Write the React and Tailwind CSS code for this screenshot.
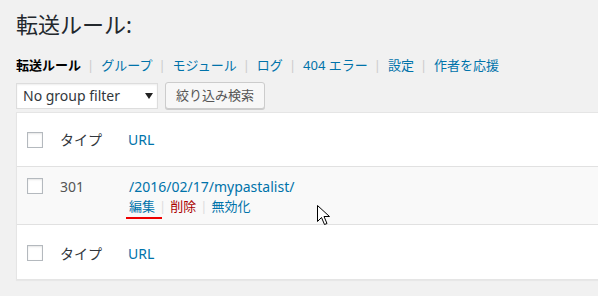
const font = { fontFamily: '"Segoe UI", "Noto Sans", "Noto Sans CJK JP", sans-serif' };

const Checkbox = () => (
  <span className="block w-4 h-4 border border-[#b4b9be] bg-white shadow-[inset_0_1px_2px_rgba(0,0,0,0.1)]" />
);

const Sep = () => <span className="text-[#ccc] ml-[6px] mr-[7px]">|</span>;

const Cursor = () => (
  <svg className="absolute left-[317px] top-[205px]" width="13" height="21" viewBox="0 0 13 21">
    <path d="M0.5 0.5 L0.5 16.5 L4.5 12.5 L7.5 19.5 L10 18.5 L7 11.5 L12.5 11.5 Z" fill="#fff" stroke="#000" strokeWidth="1" strokeLinejoin="miter" />
  </svg>
);

const App = () => {
  const tabs = ['グループ', 'モジュール', 'ログ', '404 エラー', '設定', '作者を応援'];

  return (
    <div className="relative w-[598px] h-[296px] overflow-hidden bg-[#f1f1f1] text-[#444] pl-4 pt-[10px]" style={font}>
      <h1 className="text-[22px] leading-[29px] text-[#23282d] font-normal">転送ルール:</h1>

      <div className="flex items-center mt-[16px] text-[13px] leading-5">
        <span className="font-bold text-black">転送ルール</span>
        {tabs.map((t) => (
          <span key={t} className="flex items-center">
            <Sep />
            <span className="text-[#0073aa]">{t}</span>
          </span>
        ))}
      </div>

      <div className="flex items-center gap-[7px] mt-[7px]">
        <div className="flex items-center justify-between w-[142px] h-[26px] border border-[#ddd] bg-white pl-[6px] pr-[4px] shadow-[inset_0_1px_2px_rgba(0,0,0,0.07)]">
          <span className="text-[14px] text-[#32373c]">No group filter</span>
          <svg width="8" height="6" viewBox="0 0 8 6"><path d="M0 0 H8 L4 6 Z" fill="#222" /></svg>
        </div>
        <button className="h-[27px] px-[10px] border border-[#ccc] rounded-[3px] bg-[#f7f7f7] text-[13px] text-[#555] shadow-[0_1px_0_#ccc]">
          絞り込み検索
        </button>
      </div>

      <div className="mt-[3px] border border-r-0 border-[#e5e5e5] bg-white shadow-[0_1px_1px_rgba(0,0,0,0.04)] text-[14px]">
        <div className="flex items-center h-[54px] border-b border-[#e1e1e1]">
          <div className="w-[43px] pl-[10px]"><Checkbox /></div>
          <span className="w-[68px] text-[#32373c]">タイプ</span>
          <span className="text-[#0073aa]">URL</span>
        </div>

        <div className="flex h-[58px] bg-[#f9f9f9] border-b border-[#e1e1e1] pt-[10px]">
          <div className="w-[43px] pl-[10px] pt-[1px]"><Checkbox /></div>
          <span className="w-[69px] text-[#555] leading-[18px] pt-[1px]">301</span>
          <div className="leading-[18px] pt-[1px]">
            <div className="text-[#0073aa]">/2016/02/17/mypastalist/</div>
            <div className="flex items-center text-[13px] mt-[1px]">
              <span className="relative text-[#0073aa]">
                編集
                <span className="absolute left-[-3px] right-[-7px] top-[20px] h-[2px] bg-[#e00]" />
              </span>
              <span className="text-[#ddd] mx-[4px]">|</span>
              <span className="text-[#a00]">削除</span>
              <span className="text-[#ddd] mx-[4px]">|</span>
              <span className="text-[#0073aa]">無効化</span>
            </div>
          </div>
        </div>

        <div className="flex items-center h-[54px] pt-[2px]">
          <div className="w-[43px] pl-[10px]"><Checkbox /></div>
          <span className="w-[68px] text-[#32373c]">タイプ</span>
          <span className="text-[#0073aa]">URL</span>
        </div>
      </div>

      <Cursor />
    </div>
  );
};

export default App;
